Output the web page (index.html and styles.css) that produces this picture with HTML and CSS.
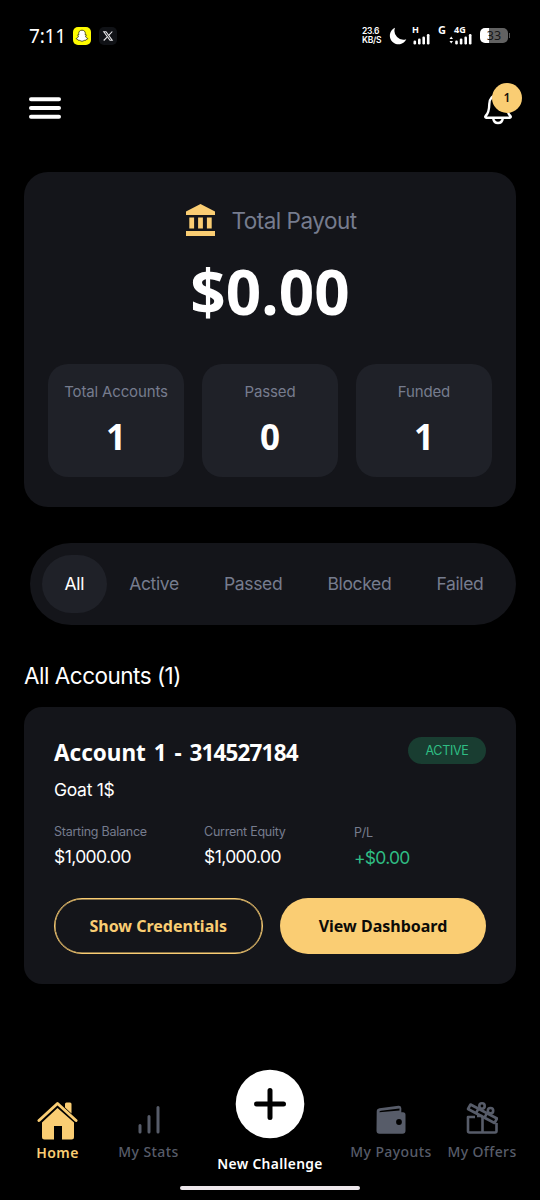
FILE: index.html
```html
<!DOCTYPE html>
<html lang="en">
<head>
<meta charset="utf-8">
<title>Accounts</title>
<link rel="stylesheet" href="styles.css">
</head>
<body>
<div class="screen">
  <div class="status">
    <span class="clock">7:11</span>
    <svg class="app-icon snap" viewBox="0 0 18 18"><rect width="18" height="18" rx="5" fill="#fffc00"/><path d="M9 3.200c2.200 0 3.400 1.400 3.300 3.400l-.1 1.300 1.100-.1c.5.3.1.9-.8 1.300.4 1.300 1.200 2 2.300 2.400 0 .8-1 .9-1.800 1.100l-.3.8-1.500 0c-.8.2-1.200.9-2.200.9s-1.400-.7-2.200-.9l-1.500 0-.3-.8c-.8-.2-1.800-.3-1.800-1.100 1.100-.4 1.900-1.100 2.300-2.400-.9-.4-1.300-1-.8-1.300l1.100.1-.1-1.300C5.600 4.600 6.800 3.200 9 3.200z" fill="#fff" stroke="#33320a" stroke-width=".8"/></svg>
    <svg class="app-icon" viewBox="0 0 18 18"><rect width="18" height="18" rx="5" fill="#101216"/><path d="M4.800 4.700h2.200l6.200 8.600h-2.200z" fill="none" stroke="#e8e8ea" stroke-width="1.100"/><path d="M13.300 4.500 9.900 8.200M8.100 10.200l-3.400 3.300" stroke="#e8e8ea" stroke-width="1.100"/></svg>
    <div class="status-right">
      <div class="speed"><span>23.6</span><span>KB/S</span></div>
      <svg class="moon" width="18" height="18" viewBox="0 0 18 18"><path d="M6 .8A8.600 8.600 0 1 0 17.300 12.200 8.900 8.900 0 0 1 6 .8z" fill="#fff"/></svg>
      <div class="signal first">
        <span class="net">H</span>
        <svg width="18" height="12" viewBox="0 0 18 12" fill="#fff"><rect x="1.500" y="7.500" width="2.600" height="4" rx="1.200"/><rect x="6" y="5.500" width="2.600" height="6" rx="1.200"/><rect x="10.400" y="3.500" width="2.600" height="8" rx="1.200"/><rect x="14.900" y="1" width="2.600" height="10.500" rx="1.200"/></svg>
      </div>
      <span class="net g">G</span>
      <div class="signal second">
        <span class="net">4G</span>
        <svg width="23" height="12" viewBox="0 0 23 12" fill="#fff"><path d="M.5 6 2.200 3.500 4 6zM.5 8 2.200 10.500 4 8z"/><rect x="6.200" y="7.500" width="2.600" height="4" rx="1.200"/><rect x="10.800" y="5.500" width="2.600" height="6" rx="1.200"/><rect x="15.400" y="3.500" width="2.600" height="8" rx="1.200"/><rect x="19.900" y="1" width="2.600" height="10.500" rx="1.200"/></svg>
      </div>
      <div class="battery"><span class="pct">33</span></div>
      <span class="cap"></span>
    </div>
  </div>

  <div class="topbar">
    <svg width="32" height="22" viewBox="0 0 32 22"><path d="M2 2.200h28M2 11h28M2 19.800h28" stroke="#fff" stroke-width="4" stroke-linecap="round"/></svg>
    <div class="bell">
      <svg width="28" height="30" viewBox="0 0 28 30" fill="none" stroke="#fff" stroke-width="2.400" stroke-linejoin="round"><path d="M14 0C8.500 0 5.400 4 5.300 9c-.1 6-1.300 9.800-3.700 12-.7.800-.3 1.700.6 1.700h23.600c.9 0 1.300-.9.600-1.700C24 18.800 22.800 15 22.700 9 22.600 4 19.500 0 14 0z"/><path d="M9.200 23.500c.5 3 2.200 4.500 4.800 4.500s4.300-1.500 4.800-4.500"/></svg>
      <span class="count">1</span>
    </div>
  </div>

  <section class="card payout">
    <div class="payout-title">
      <svg width="29" height="32" viewBox="0 0 29 32" fill="#facd73"><path d="M14.500 0 29 7.500V11H0V7.500zM3.300 13.500h4.800v11H3.300zM12.100 13.500h4.800v11h-4.800zM20.900 13.500h4.800v11h-4.800zM0 27h29v5H0z"/></svg>
      <span>Total Payout</span>
    </div>
    <div class="amount">$0.00</div>
    <div class="tiles">
      <div class="tile"><span>Total Accounts</span><b>1</b></div>
      <div class="tile"><span>Passed</span><b>0</b></div>
      <div class="tile"><span>Funded</span><b>1</b></div>
    </div>
  </section>

  <div class="tabs">
    <span class="tab on">All</span><span class="tab">Active</span><span class="tab">Passed</span><span class="tab">Blocked</span><span class="tab">Failed</span>
  </div>

  <h2 class="heading">All Accounts (1)</h2>

  <section class="card account">
    <div class="account-head"><h3>Account 1 - <span class="number">314527184</span></h3><span class="badge">ACTIVE</span></div>
    <div class="plan">Goat 1$</div>
    <div class="facts">
      <div class="fact"><span>Starting Balance</span><b>$1,000.00</b></div>
      <div class="fact"><span>Current Equity</span><b>$1,000.00</b></div>
      <div class="fact profit"><span>P/L</span><b>+$0.00</b></div>
    </div>
    <div class="actions"><button class="btn outline">Show Credentials</button><button class="btn solid">View Dashboard</button></div>
  </section>

  <nav class="nav">
    <div class="item home">
      <svg width="42" height="40" viewBox="0 0 42 40"><path d="M2 19.500 20.500 2.500 39 19.500" fill="none" stroke="#facd73" stroke-width="3" stroke-linecap="round" stroke-linejoin="round"/><path d="M28 3q0-1.500 1.500-1.500h3.500q1.500 0 1.500 1.500V12.500l-6.500-6zM20.500 7 37 21.500V36q0 2.500-2.500 2.500H25V25h-8v13.500H7.500Q5 38.500 5 36V21.500z" fill="#facd73"/></svg>
      <span>Home</span>
    </div>
    <div class="item stats">
      <svg width="24" height="28" viewBox="0 0 24 28"><path d="M3 19.500V26M12 10.500V26M21 1.500V26" stroke="#575c69" stroke-width="3" stroke-linecap="round"/></svg>
      <span>My Stats</span>
    </div>
    <div class="item create">
      <svg width="70" height="70" viewBox="0 0 70 70"><circle cx="35" cy="35" r="34.300" fill="#fff"/><path d="M35 21.500v27M21.500 35h27" stroke="#000" stroke-width="5" stroke-linecap="round"/></svg>
      <span>New Challenge</span>
    </div>
    <div class="item payouts">
      <svg width="30" height="30" viewBox="0 0 30 30"><path d="M.7 6.500Q.7 3.700 3.500 3.200L22.500.8Q25 .6 25.300 3V7.200H27q2.500 0 2.500 2.500v16q0 3-3 3H3.500q-3 0-3-3z" fill="#575c69"/><path d="M3.300 7.200Q3.300 6 5 5.800L23.500 3.500V5.600z" fill="#000"/><circle cx="23" cy="17" r="2.900" fill="#000"/></svg>
      <span>My Payouts</span>
    </div>
    <div class="item offers">
      <svg width="32" height="33" viewBox="0 0 32 33" fill="none" stroke="#575c69" stroke-width="2.600" stroke-linejoin="round"><path d="M9 15H2v14q0 1.500 1.500 1.500h25.500q1.500 0 1.500-1.500V21M16.500 14v16.500"/><path d="M4.500 2.500 31 16.500l-2.500 4.500L2 7z"/><path d="M12.500 6.700l-2.500 4.500M21 11.200l-2.500 4.500M16.500 14l-5.500 0"/><circle cx="16" cy="4" r="2.700"/><circle cx="24.500" cy="8.700" r="2.700"/></svg>
      <span>My Offers</span>
    </div>
  </nav>
  <div class="gesture"></div>
</div>
</body>
</html>
```
FILE: styles.css
```css
* { box-sizing: border-box; }
body { margin: 0; background: #000; color: #fff; font-family: Inter, "Liberation Sans", sans-serif; }
.screen { width: 540px; height: 1200px; overflow: hidden; display: flex; flex-direction: column; background: #000; }
svg { display: block; flex: none; }

.status { height: 71px; padding: 0 30px 0 29px; display: flex; align-items: center; flex: none; }
.clock { width: 44px; font: 400 19px/24px "Noto Sans", sans-serif; letter-spacing: -.2px; white-space: nowrap; }
.app-icon { width: 18px; height: 18px; margin-right: 8px; }
.status-right { margin-left: auto; display: flex; align-items: center; }
.speed { width: 27px; display: flex; flex-direction: column; gap: 1px; margin-top: -1px; font: 600 8.500px/8px Inter, sans-serif; letter-spacing: -.3px; }
.moon { margin-right: 5px; }
.signal { height: 21px; display: flex; flex-direction: column; margin-top: -1px; }
.net { height: 9px; font: 700 9px/9px "Noto Sans", sans-serif; }
.signal svg { margin-top: -1px; }
.first { width: 26px; }
.g { width: 11px; font-size: 11px; margin-top: -12px; }
.second { width: 31px; }
.second .net { padding-left: 5px; }
.battery { width: 28px; height: 15px; border-radius: 5px; background: linear-gradient(90deg, #fff 9px, #626262 9px); display: flex; align-items: center; justify-content: center; }
.cap { width: 1px; height: 5px; margin-left: 1px; background: #555; }
.pct { color: #171717; font: 400 12.500px/15px "Noto Sans", sans-serif; }

.topbar { height: 101px; padding: 26px 29px 0; display: flex; justify-content: space-between; flex: none; }
.bell { position: relative; margin-top: -2px; margin-right: -1px; }
.count { position: absolute; left: 8px; top: -12px; width: 30px; height: 30px; border-radius: 50%; background: #facd73; color: #16120a; font: 600 12px/30px "Noto Sans", sans-serif; text-align: center; }

.card { margin: 0 24px; background: #14151a; flex: none; }
.payout { height: 335px; padding: 31px 24px 30px; border-radius: 24px; display: flex; flex-direction: column; }
.payout-title { height: 34px; padding-left: 3px; display: flex; align-items: center; justify-content: center; gap: 16px; color: #767c8e; font-size: 22.500px; font-weight: 400; letter-spacing: -.5px; }
.amount { height: 80px; margin-top: 14px; text-align: center; font: 700 62px/80px "Noto Sans", sans-serif; }
.tiles { margin-top: auto; display: grid; grid-template-columns: repeat(3, 1fr); gap: 18px; }
.tile { height: 113px; padding-top: 17px; border-radius: 20px; background: #1f2128; display: flex; flex-direction: column; align-items: center; }
.tile span { color: #767c8e; font-size: 15px; line-height: 22px; letter-spacing: -.15px; font-weight: 400; white-space: nowrap; }
.tile b { margin-top: 11px; font: 700 35px/46px "Noto Sans", sans-serif; }

.tabs { height: 82px; margin: 36px 24px 0 30px; padding: 12px; border-radius: 41px; background: #14151a; display: flex; flex: none; }
.tab { height: 58px; padding: 0 22.600px; border-radius: 29px; line-height: 58px; font-size: 17.500px; font-weight: 400; color: #767c8e; letter-spacing: -.36px; white-space: nowrap; }
.tab.on { background: #1f2128; color: #fff; }
.heading { margin: 35px 24px 0; height: 47px; font-size: 22.500px; line-height: 31px; font-weight: 400; letter-spacing: -.5px; flex: none; }

.account { height: 277px; padding: 30px; border-radius: 18px; }
.account-head { height: 30px; display: flex; justify-content: space-between; align-items: flex-start; }
.account-head h3 { margin: 1px 0 0; font: 700 22.500px/30px "Noto Sans", sans-serif; word-spacing: 2px; white-space: nowrap; }
.number { letter-spacing: -.85px; }
.badge { width: 78px; height: 27px; border-radius: 14px; background: #193d31; color: #2fbd84; text-align: center; font-size: 12.500px; line-height: 27px; letter-spacing: -.3px; }
.plan { margin-top: 11px; font-size: 17.500px; line-height: 24px; letter-spacing: -.3px; }
.facts { height: 48px; margin-top: 21px; display: grid; grid-template-columns: 150px 150px 1fr; }
.fact { display: flex; flex-direction: column; }
.fact span { color: #767c8e; font-size: 12.500px; line-height: 18px; letter-spacing: -.25px; }
.fact b { margin-top: 4px; font-size: 17.500px; line-height: 24px; font-weight: 400; letter-spacing: -.6px; }
.profit { padding-top: 1px; }
.profit b { color: #2fbd84; letter-spacing: -.75px; }
.actions { margin-top: 27px; display: grid; grid-template-columns: 208.500px 206px; gap: 17.500px; }
.btn { height: 56px; padding: 0; border: 0; border-radius: 28px; font: 700 16px/24px "Noto Sans", sans-serif; }
.outline { border: 1px solid #facd73; box-shadow: inset 0 0 0 .5px #facd73; background: none; color: #facd73; }
.solid { background: #facd73; color: #0c0b08; }

.nav { height: 116px; margin-top: 84px; display: grid; grid-template-columns: 115px 67px 176px 66px 116px; flex: none; }
.item { display: flex; flex-direction: column; align-items: center; color: #575c69; font: 500 14px/20px "Noto Sans", sans-serif; white-space: nowrap; letter-spacing: .4px; }
.home { padding-top: 33px; color: #facd73; font-weight: 600; }
.stats { padding-top: 38px; }
.create { padding-top: 1px; color: #fff; font-weight: 600; font-size: 13.800px; letter-spacing: .35px; }
.payouts { padding-top: 37px; }
.offers { padding-top: 34px; }
.stats span, .payouts span, .offers span { margin-top: auto; margin-bottom: 22px; }
.home span { margin-top: auto; margin-bottom: 21px; }
.create span { margin-top: auto; margin-bottom: 10px; }
.gesture { width: 180px; height: 4px; margin: 2px auto 0; border-radius: 2px; background: #eee8ec; flex: none; }
```
